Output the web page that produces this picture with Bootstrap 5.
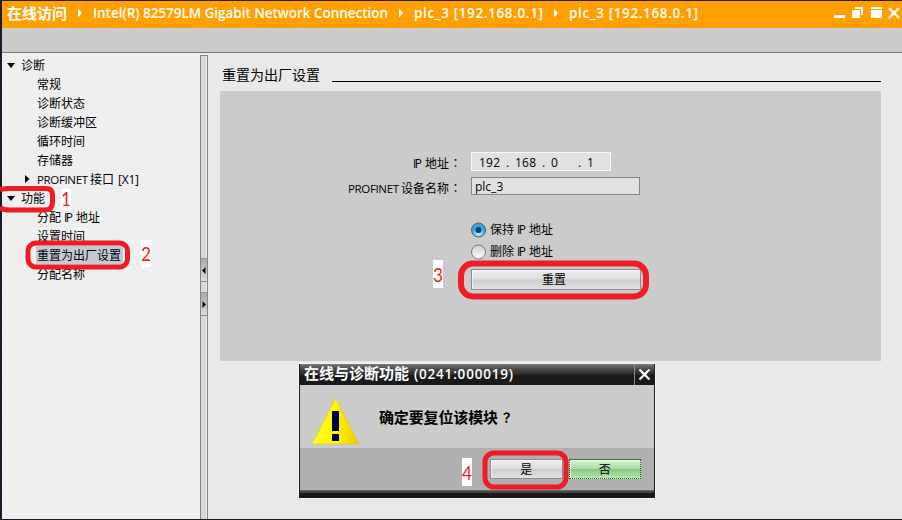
<!DOCTYPE html>
<html lang="zh-CN">
<head>
<meta charset="utf-8">
<title>在线访问</title>
<link rel="stylesheet" href="https://cdn.jsdelivr.net/npm/bootstrap@5.3.0/dist/css/bootstrap.min.css">
<style>
body{font:12px/19px "Open Sans","Noto Sans CJK SC",sans-serif;color:#000;background:#e9e9e9;width:902px;height:520px;overflow:hidden}
.window-frame{width:902px;height:520px;border-left:2px solid #1b1b2d;border-top:1px solid #23202c;border-bottom:1px solid #1b1b2d}
.titlebar{height:27px;background:#ff9f00;color:#fff;padding-left:5px;padding-right:2px}
.titlebar svg,.tree svg{display:block;flex:none}
.toolstrip{height:25px;background:#cbcbcb;border-bottom:1px solid #777}
.tree{width:198px;background:#efefef;padding-top:3px;flex:none}
.tree-row{height:19px;font-size:12px;line-height:20px;border-bottom:1px solid #ebebeb;padding-left:35px}
.tree-row.root{padding-left:5px;padding-top:1px}
.tree-row.root svg{margin-right:6px}
.tree-row.sub{padding-left:21px}
.chosen{background:#c2cad4;margin-left:-1px;padding:0 1px;height:18px;width:87px}
.splitter{width:8px;margin-top:2px;flex:none;background:#d8d8d8;border:1px solid #858585;border-bottom:0;padding-top:202px;box-shadow:inset -1px 0 #eee}
.split-btn{height:24px;background:linear-gradient(#aaa,#ddd);border-top:1px solid #999;border-bottom:1px solid #888}
.split-btn+.split-btn{margin-top:10px}
.split-btn svg{display:block}
.content{padding:12px 21px 0 12px;background:#e9e9e9}
.heading{font-size:14px;line-height:20px;height:26px;padding-left:2px}
.heading .rule{height:1px;background:#000;margin-left:12px;margin-top:16px}
.panel{height:270px;background:#cbcbcb;padding-top:61px}
.field-label{width:251px;padding-right:9px}
.field-label svg{display:block}
.full-punct{font-family:"Noto Sans CJK TC",sans-serif}
.ip-box{width:140px;height:19px;border:1px solid #f8f8f8;background:#e1e1e1;padding-left:7px}
.name-box{width:169px;height:18px;border:1px solid #858585;background:#e1e1e1;line-height:17px;padding-left:3px}
.name-row{margin-top:1px}
.choice{height:22px;margin-left:250px;line-height:20px}
.choice svg{flex:none}
.choices{padding-top:22px}
.face{border:1px solid #8b8b8b;background:linear-gradient(#efefef,#dedede 48%,#cdcdcd 52%,#e2e2e2);box-shadow:inset 1px 1px #fff9;border-radius:0;padding:0;font-size:12px;line-height:17px;text-align:center;color:#000}
.reset-btn{width:170px;height:21px;margin:6px 0 0 251px;line-height:19px;padding-right:4px}
.dialog-box{position:absolute;left:298px;top:363px;width:358px;height:136px;border:1px solid #f7f7f7;background:#1a1a1a;padding:0 1px}
.dialog-title{height:21px;background:linear-gradient(#7b7b7b,#505050 20%,#292929 50%,#1a1a1a 55%);color:#fff;font-size:14px;font-weight:600;line-height:20px;padding-left:4px}
.dialog-close{width:20px;border-left:1px solid #8a8a8a;height:21px;padding:4px 0 0 3px}
.dialog-close svg{display:block}
.dialog-message{height:63px;background:#cbcbcb;padding:11px 0 0 12px}
.dialog-message .question{margin:10px 0 0 19px}
.dialog-foot{height:43px;background:#b0b0b0;padding:11px 13px 0 190px;border-bottom:1px solid #666}
.yes-btn{width:73px;height:20px}
.no-btn{width:73px;height:20px;margin-left:6px;background:linear-gradient(#dcf5d7,#a9dba4 48%,#83c87c 52%,#b6e8b0);border:1px dotted #286c28;border-top:1px solid #3c713c}
.dialog-lip{height:2px;background:#454545}
.annotations{position:absolute;left:0;top:0}
.annotations text{font:20px "Lato","Liberation Sans",sans-serif;fill:#f01d25}
</style>
</head>
<body>
<div class="window-frame d-flex flex-column">
  <header class="titlebar d-flex align-items-start">
    <svg width="893" height="26" viewBox="7 1 893 26">
      <g fill="#fff" font-size="13.5" font-weight="600">
        <text x="7" y="18.5" font-size="15" font-weight="700" textLength="60">在线访问</text>
        <text x="93" y="18" textLength="295">Intel(R) 82579LM Gigabit Network Connection</text>
        <text x="414" y="18" textLength="129">plc_3 [192.168.0.1]</text>
        <text x="569" y="18" textLength="129">plc_3 [192.168.0.1]</text>
      </g>
      <path fill="#fff" d="M78 8.500l4 4.500-4 4.500zM399 8.500l4 4.500-4 4.500zM554 8.500l4 4.500-4 4.500zM834 15h11v3h-11zM855 7h8v8h-2v-6h-6zM852 10h8v8h-8zM871 7h11v2h-11zM871 10h11v8h-11z"/>
      <path d="M889 8l10 10M899 8l-10 10" stroke="#fff" stroke-width="2.200"/>
    </svg>
  </header>
  <div class="toolstrip"></div>
  <main class="d-flex flex-grow-1">
    <nav class="tree">
      <div class="tree-row root d-flex align-items-center"><svg width="8" height="5"><path d="M0 0h8l-4 5z"/></svg>诊断</div>
      <div class="tree-row">常规</div>
      <div class="tree-row">诊断状态</div>
      <div class="tree-row">诊断缓冲区</div>
      <div class="tree-row">循环时间</div>
      <div class="tree-row">存储器</div>
      <div class="tree-row sub d-flex align-items-center"><svg width="14" height="8"><path d="M2 0v8l4.500-4z"/></svg><svg width="110" height="18"><text x="0" y="13.5" font-size="11.500" textLength="51">PROFINET</text><text x="53" y="13.5" textLength="24">接口</text><text x="81" y="13.5" textLength="21">[X1]</text></svg></div>
      <div class="tree-row root d-flex align-items-center"><svg width="8" height="5"><path d="M0 0h8l-4 5z"/></svg>功能</div>
      <div class="tree-row"><svg width="70" height="18"><text x="0" y="14">分配</text><text x="27" y="14" textLength="9">IP</text><text x="39" y="14">地址</text></svg></div>
      <div class="tree-row">设置时间</div>
      <div class="tree-row"><div class="chosen">重置为出厂设置</div></div>
      <div class="tree-row">分配名称</div>
      <div class="tree-row"></div><div class="tree-row"></div><div class="tree-row"></div><div class="tree-row"></div>
      <div class="tree-row"></div><div class="tree-row"></div><div class="tree-row"></div><div class="tree-row"></div>
      <div class="tree-row"></div><div class="tree-row"></div><div class="tree-row"></div><div class="tree-row"></div>
    </nav>
    <div class="splitter">
      <div class="split-btn"><svg width="6" height="22"><path d="M4.500 8v7L1 11.500z"/></svg></div>
      <div class="split-btn"><svg width="6" height="22"><path d="M1.500 8v7L5 11.500z"/></svg></div>
    </div>
    <section class="content flex-grow-1">
      <div class="heading d-flex"><span>重置为出厂设置</span><div class="rule flex-grow-1"></div></div>
      <div class="panel">
        <div class="d-flex"><div class="field-label d-flex justify-content-end"><svg width="125" height="24"><text x="76" y="16" textLength="9">IP</text><text x="88" y="16">地址</text><text class="full-punct" x="112.5" y="16" lang="zh-TW">：</text></svg></div><div class="ip-box"><svg width="125" height="17" class="d-block"><text x="0" y="14" textLength="21">192</text><text x="27" y="14">.</text><text x="36" y="14" textLength="21">168</text><text x="63" y="14">.</text><text x="72" y="14">0</text><text x="99" y="14">.</text><text x="108" y="14">1</text></svg></div></div>
        <div class="d-flex name-row"><div class="field-label d-flex justify-content-end"><svg width="125" height="20"><text x="11" y="15.5" font-size="11.500" textLength="51">PROFINET</text><text x="64" y="15.5">设备名称</text><text class="full-punct" x="112.5" y="15.5" lang="zh-TW">：</text></svg></div><div class="name-box">plc_3</div></div>
        <div class="choices">
        <div class="choice d-flex align-items-center"><svg width="90" height="20"><defs><radialGradient id="on" cy=".8"><stop stop-color="#b9f4ff"/><stop offset="1" stop-color="#39a5dd"/></radialGradient><linearGradient id="off" x2="0" y2="1"><stop stop-color="#ccc"/><stop offset="1" stop-color="#fff"/></linearGradient></defs><circle cx="8.500" cy="10" r="7" fill="url(#on)" stroke="#555e68"/><circle cx="8.500" cy="10" r="3" fill="#093d78"/><text x="20" y="14">保持</text><text x="47" y="14" textLength="9">IP</text><text x="59" y="14">地址</text></svg></div>
        <div class="choice d-flex align-items-center"><svg width="90" height="20"><circle cx="8.500" cy="10" r="7" fill="url(#off)" stroke="#777"/><text x="20" y="14">删除</text><text x="47" y="14" textLength="9">IP</text><text x="59" y="14">地址</text></svg></div>
        <button class="btn face reset-btn d-block">重置</button>
        </div>
      </div>
    </section>
  </main>
</div>
<div class="dialog-box">
  <div class="dialog-title d-flex justify-content-between"><svg width="215" height="20"><g fill="#fff"><text x="0" y="15" font-size="15" textLength="105">在线与诊断功能</text><text x="110" y="14.500" font-size="13.5" textLength="99">(0241:000019)</text></g></svg><div class="dialog-close"><svg width="13" height="13"><path d="M1.500 1.500l10 10M11.500 1.500l-10 10" stroke="#fff" stroke-width="2.200"/></svg></div></div>
  <div class="dialog-message d-flex align-items-start"><svg width="48" height="50"><defs><linearGradient id="warn"><stop stop-color="#ffff18"/><stop offset=".5" stop-color="#fff600"/><stop offset="1" stop-color="#f0c800"/></linearGradient></defs><path d="M23.500 2L47 48H0z" fill="url(#warn)" stroke="#d9c13a" stroke-width=".6"/><path d="M20 15h7v20h-7zM20 38h7v7h-7z" fill="#00003f"/></svg><svg class="question" width="145" height="24"><g font-weight="700"><text x="0" y="17" font-size="15" textLength="119">确定要复位该模块</text><text class="full-punct" x="121" y="16" font-size="13" lang="zh-TW">？</text></g></svg></div>
  <div class="dialog-foot d-flex"><button class="btn face yes-btn">是</button><button class="btn face no-btn">否</button></div>
  <div class="dialog-lip"></div>
</div>
<svg class="annotations" width="902" height="520">
  <g fill="#fff"><path d="M61 189h10v21H61zM141 240h10v27h-10zM433 260h10v28h-10zM462 458h10v28h-10z"/></g>
  <text x="61" y="205.500" textLength="10" lengthAdjust="spacingAndGlyphs">1</text><text x="141" y="261" textLength="10" lengthAdjust="spacingAndGlyphs">2</text><text x="433" y="282" textLength="10" lengthAdjust="spacingAndGlyphs">3</text><text x="462" y="480" textLength="10" lengthAdjust="spacingAndGlyphs">4</text>
  <g fill="none" stroke="#ee1c25" stroke-width="5">
    <path d="M0 189.500Q4 188.500 10 188.500H46Q52.500 188.500 52.500 195V202Q52.500 210 45 210H10Q2 210 0 207"/>
    <rect x="28" y="243" width="99.500" height="24" rx="8"/>
    <rect x="461" y="263.500" width="185" height="33" rx="12" stroke-width="6"/>
    <rect x="485" y="453" width="81" height="34" rx="9"/>
  </g>
</svg>
<script src="https://cdn.jsdelivr.net/npm/bootstrap@5.3.0/dist/js/bootstrap.bundle.min.js"></script>
</body>
</html>
